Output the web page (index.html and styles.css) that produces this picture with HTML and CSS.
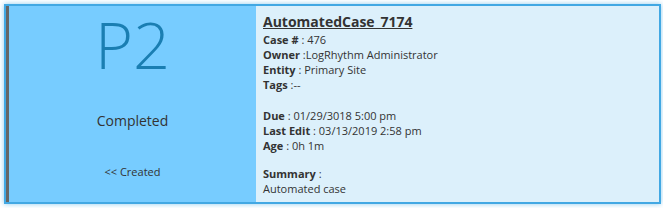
FILE: index.html
```html
<!DOCTYPE html>
<html lang="en">
<head>
    <meta charset="UTF-8">
    <title>Case Card</title>
    <link rel="stylesheet" href="styles.css">
</head>
<body>
    <div class="case-card">
        <!-- Priority / status side -->
        <div class="case-status">
            <div class="priority">P2</div>
            <div class="status">Completed</div>
            <div class="prev-status">&lt;&lt; Created</div>
        </div>

        <!-- Case details -->
        <div class="case-details">
            <div class="case-title">AutomatedCase_7174</div>
            <div class="detail-group">
                <div><b>Case #</b> : 476</div>
                <div><b>Owner</b> :LogRhythm Administrator</div>
                <div><b>Entity</b> : Primary Site</div>
                <div><b>Tags</b> :--</div>
            </div>
            <div class="detail-group">
                <div><b>Due</b> : 01/29/3018 5:00 pm</div>
                <div><b>Last Edit</b> : 03/13/2019 2:58 pm</div>
                <div><b>Age</b> : 0h 1m</div>
            </div>
            <div class="detail-group">
                <div><b>Summary</b> :</div>
                <div>Automated case</div>
            </div>
        </div>
    </div>
</body>
</html>
```

FILE: styles.css
```css
body {
    margin: 0;
    padding: 4px 2px 4px 4px;
    font-family: "Open Sans", "Noto Sans", sans-serif;
    background-color: #ffffff;
}

.case-card {
    display: flex;
    height: 196px;
    border: 2px solid #42a8e3;
    box-shadow: 0 0 5px rgba(66, 168, 227, 0.6);
    background-color: #dcf0fb;
}

.case-status {
    width: 247px;
    border-left: 3px solid #666666;
    background-color: #77ccff;
    display: flex;
    flex-direction: column;
    align-items: center;
    text-align: center;
}

.priority {
    margin-top: 6px;
    font-size: 65px;
    font-weight: 300;
    line-height: 65px;
    color: #1a7eb2;
}

.status {
    margin-top: 34px;
    font-size: 14px;
    color: #333333;
}

.prev-status {
    margin-top: 34px;
    font-size: 11px;
    color: #333333;
}

.case-details {
    padding: 8px 7px;
    font-size: 11px;
    line-height: 15px;
    color: #333333;
}

.case-title {
    font-size: 14px;
    font-weight: bold;
    text-decoration: underline;
    line-height: 16px;
    margin-bottom: 2px;
}

.detail-group {
    margin-bottom: 16px;
}

.detail-group:nth-child(3) {
    margin-bottom: 13px;
}
```
